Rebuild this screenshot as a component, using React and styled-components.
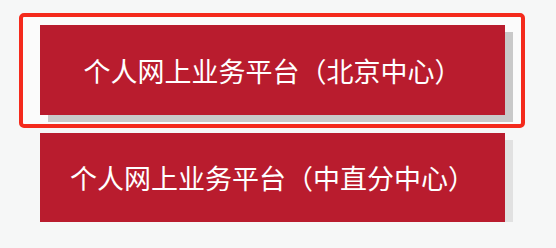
import React from 'react'
import styled, { createGlobalStyle } from 'styled-components'

const GlobalStyle = createGlobalStyle`
    html, body {
        margin: 0;
        padding: 0;
        background: #f6f7f7;
    }
    body {
        font-family: "Noto Sans CJK SC", "Noto Sans", sans-serif;
    }
`

const centers = [
    { name: '个人网上业务平台（北京中心）', active: true },
    { name: '个人网上业务平台（中直分中心）', active: false },
]

function App() {
    return (
        <>
            <GlobalStyle />
            <List>
                {centers.map((c) =>
                    c.active ? (
                        <ActiveFrame key={c.name}>
                            <CenterButton $active>{c.name}</CenterButton>
                        </ActiveFrame>
                    ) : (
                        <Plain key={c.name}>
                            <CenterButton>{c.name}</CenterButton>
                        </Plain>
                    )
                )}
            </List>
        </>
    )
}

export default App

const List = styled.div`
    display:flex;
    flex-direction:column;
    align-items:flex-start;
    padding:13px 0 0 19px;
    gap:5px;
`
const ActiveFrame = styled.div`
    box-sizing:border-box;
    width:506px;
    height:115px;
    border:4px solid #f42a1c;
    border-radius:5px;
    background:#fbfbfb;
    padding:8px 0 0 17px;
`
const Plain = styled.div`
    padding-left:21px;
`
const CenterButton = styled.div`
    width:465px;
    height:${(p) => (p.$active ? '90px' : '89px')};
    display:flex;
    align-items:center;
    justify-content:center;
    background:#b91c2e;
    color:#fff;
    font-size:27px;
    box-shadow:8px 7px 0 ${(p) => (p.$active ? '#c9c9c9' : '#e1e1e1')};
    cursor:pointer;
`
